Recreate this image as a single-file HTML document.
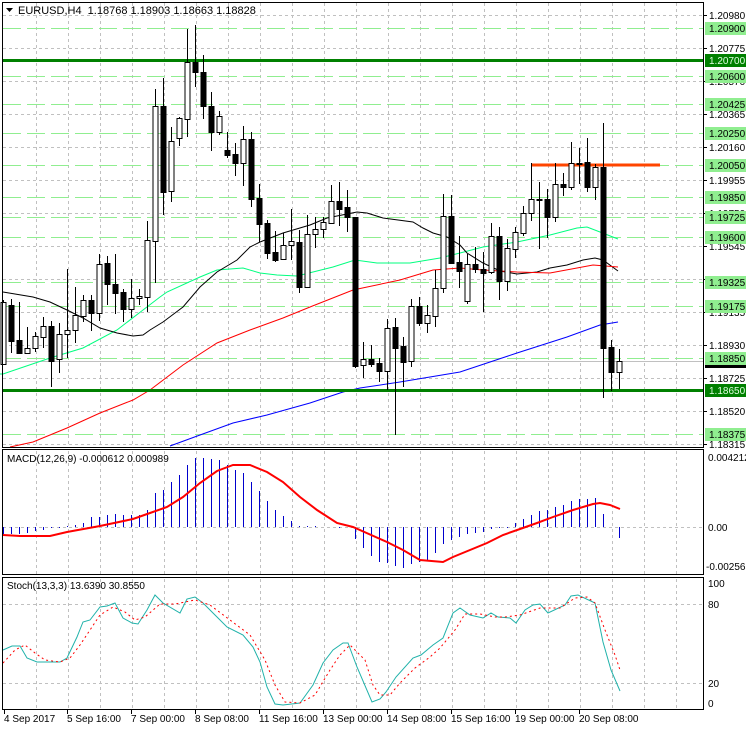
<!DOCTYPE html>
<html><head><meta charset="utf-8"><style>
html,body{margin:0;padding:0;background:#fff;}
svg{display:block;font-family:"Liberation Sans",sans-serif;}
</style></head><body>
<svg id="s" width="746" height="731" xmlns="http://www.w3.org/2000/svg">
</svg>
<script>
var S=document.getElementById('s');var h='';
function L(x1,y1,x2,y2,c,w,d){h+='<line x1="'+x1+'" y1="'+y1+'" x2="'+x2+'" y2="'+y2+'" stroke="'+c+'" stroke-width="'+(w||1)+'"'+(d?' stroke-dasharray="'+d+'"':'')+'/>';}
function P(pts,c,w,d){h+='<polyline fill="none" points="'+pts+'" stroke="'+c+'" stroke-width="'+(w||1)+'"'+(d?' stroke-dasharray="'+d+'"':'')+'/>';}
function T(x,y,t,c,s,a){h+='<text x="'+x+'" y="'+y+'" fill="'+(c||'#000')+'" font-size="'+(s||10)+'"'+(a?' text-anchor="'+a+'"':'')+'>'+t+'</text>';}
function R(x,y,w,hh,f,st){h+='<rect x="'+x+'" y="'+y+'" width="'+w+'" height="'+hh+'" fill="'+f+'"'+(st?' stroke="'+st+'"':'')+'/>';}
// vertical grid
for(var x=36;x<704;x+=32){L(x+.5,3,x+.5,447,'#c0c0c0',1,'3 3');L(x+.5,451,x+.5,574,'#c0c0c0',1,'3 3');L(x+.5,579,x+.5,709,'#c0c0c0',1,'3 3');}
// horizontal grey grid main
var gl=[15,48,81,114,147,180,213,246,279,312,345,378,411,444];
gl.forEach(function(y){L(3,y+.5,704,y+.5,'#c0c0c0',1,'3 3');});
L(3,527.5,704,527.5,'#c0c0c0',1,'3 3');L(3,604.5,704,604.5,'#c0c0c0',1,'3 3');L(3,683.5,704,683.5,'#c0c0c0',1,'3 3');
// light green levels
var lg=[[28,'1.20900'],[76,'1.20600'],[104,'1.20425'],[133,'1.20250'],[165,'1.20050'],[197,'1.19850'],[217,'1.19725'],[237,'1.19600'],[282,'1.19325'],[306,'1.19175'],[358,'1.18850'],[434,'1.18375']];
lg.forEach(function(a){L(3,a[0]+.5,704,a[0]+.5,'#90ee90',1,'18 6');});
// current price line
L(3,361.5,704,361.5,'#c0c0c0',1);
// MAs
P('0,374 3,374 50,358 83,348 117,330 143,310 160,297 167,292 200,277 217,270 243,268 260,273 277,275 297,276 333,267 355,260 377,263 410,263 440,258 460,253 483,247 517,242 550,235 577,228 587,227 600,232 618,239','#00ff7f',1);
P('3,292 33,297 50,302 67,310 83,318 100,328 117,333 133,336 143,335 150,330 163,322 183,307 200,287 217,272 237,260 250,247 260,242 283,233 310,225 327,218 357,212 367,213 383,218 413,222 423,228 433,233 447,237 460,245 467,253 483,263 500,271 517,274 537,272 550,268 567,265 583,260 595,258 603,260 618,271','#000',1);
P('10,447 33,442 67,428 100,413 133,400 150,390 183,365 217,343 250,330 283,318 310,307 353,290 400,280 433,270 460,268 483,270 517,272 550,273 577,268 593,265 618,267','#ff0000',1);
P('170,446 200,435 233,423 267,415 310,403 343,392 360,388 400,382 460,372 517,353 567,337 600,325 618,322','#0000ff',1);
// thick lines
L(3,60.5,704,60.5,'#008000',3);L(3,390.5,704,390.5,'#008000',3);
L(531,165,660,165,'#ff4500',3);
// candles [x,bull,top,bottom,high,low]
var C=[[3,1,302,364,300,364],[11,0,305,341,299,353],[19,0,340,353,302,353],[27,1,348,353,327,353],[35,1,336,348,332,352],[43,1,326,337,317,348],[51,0,326,361,321,387],[59,1,334,359,323,373],[67,1,330,334,269,358],[75,1,315,330,287,343],[83,1,300,316,295,322],[91,0,300,313,295,331],[99,1,264,313,254,321],[107,0,263,284,256,305],[115,0,284,293,254,314],[123,0,292,309,289,322],[131,1,298,309,279,318],[139,1,296,298,289,305],[147,1,240,297,221,312],[155,1,106,241,89,283],
[163,0,106,192,78,215],[171,1,141,191,127,202],[179,1,118,138,117,146],[187,1,62,119,29,137],[195,0,62,72,25,87],[203,0,72,106,55,119],[211,0,106,132,92,151],[219,1,116,132,111,135],[227,0,150,155,132,158],[235,0,154,163,143,176],[243,1,139,163,126,186],[251,0,139,199,132,207],[259,0,198,224,184,242],[267,0,223,253,220,259],[275,0,252,260,231,262],[283,1,245,259,233,260],[291,1,241,245,209,260],[299,0,242,287,230,293],[307,1,234,287,215,287],
[315,1,229,234,217,248],[323,1,222,229,217,238],[331,1,201,223,185,223],[339,0,201,209,182,226],[347,0,207,217,190,232],[355,0,217,366,217,368],[363,1,359,365,342,378],[371,0,359,364,345,367],[379,0,363,371,358,382],[387,1,328,371,319,390],[395,0,327,348,318,435],[403,0,346,362,337,387],[411,1,306,361,299,367],[419,0,306,323,297,326],[427,1,315,323,305,333],[435,1,288,316,270,327],[443,1,216,288,194,293],[451,0,216,263,195,263],
[459,0,262,271,236,288],[467,1,264,301,254,304],[475,0,264,269,247,273],[483,0,269,273,252,312],[491,1,236,272,223,274],[499,0,236,281,227,300],[507,1,248,281,239,291],[515,1,232,249,227,258],[523,1,213,233,206,236],[531,1,199,213,163,221],[539,1,199,200,182,249],[547,0,199,217,189,238],[555,1,184,217,163,222],[563,0,184,187,173,196],[571,1,163,187,142,190],[579,1,163,164,148,184],[587,0,162,187,138,192],[595,1,167,187,164,200],[603,0,167,348,123,398],[611,0,347,372,340,391],[619,1,361,372,349,389]];
C.forEach(function(c){var x=c[0];L(x+.5,c[4],x+.5,c[5],'#000',1);
 var hh=Math.max(1,c[3]-c[2]);
 if(c[1]){R(x-2,c[2]+.5,5,hh,'#fff','#000');}else{R(x-2.5,c[2],6,hh+1,'#000');}});
// MACD histogram
var M={3:534,11:534,19:534,27:533,35:531,43:530,51:528,59:528,67:526,75:525,83:523,91:517,99:517,107:515,115:514,123:515,131:515,139:515,147:510,155:493,163:490,171:482,179:475,187:465,195:458,203:458,211:459,219:460,227:465,235:470,243:473,251:482,259:491,267:501,275:510,283:516,291:521,299:526,307:526,315:526,
339:528,355:539,363:548,371:556,379:562,387:563,395:566,403:568,411:564,419:562,427:560,435:553,443:544,451:540,459:537,467:534,475:533,483:532,491:529,499:528,507:528,515:523,523:519,531:515,539:511,547:510,555:507,563:505,571:501,579:499,587:499,595:498,603:514,619:538};
for(var k in M){var x=+k;L(x+.5,527,x+.5,M[k],'#0000cd',1);}
P('3,535 20,536 50,536 67,532 100,526 133,519 150,513 167,507 183,497 200,483 217,471 233,465 250,465 267,472 283,482 300,497 317,510 337,523 353,527 387,542 403,550 420,560 443,562 453,557 487,543 503,535 520,529 537,523 553,517 573,510 593,504 600,503 610,505 620,509','#ff0000',2);
// Stoch
P('3,650 12,646 20,646 27,658 37,662 50,662 60,662 67,658 77,637 83,622 90,620 100,607 107,606 115,603 123,618 132,623 138,624 147,610 155,595 163,603 180,613 187,599 195,597 203,603 213,613 227,627 243,635 253,647 260,662 267,687 275,704 283,705 300,703 313,685 323,663 333,650 343,643 348,643 357,667 372,702 380,699 386,692 396,677 413,658 421,655 433,645 443,638 453,613 460,608 470,615 483,618 491,613 498,617 510,618 516,623 525,610 533,605 540,604 548,613 565,605 571,596 578,595 595,603 603,642 611,670 620,691','#20b2aa',1);
P('3,663 15,650 25,645 35,653 45,660 60,662 70,658 80,645 90,630 100,615 113,607 125,612 135,620 145,617 160,604 175,604 195,600 210,605 230,620 250,635 265,660 275,685 285,702 300,703 315,695 330,670 340,655 350,645 365,660 373,685 380,695 390,695 400,683 415,668 430,657 440,648 455,630 465,614 480,614 495,617 505,617 520,615 540,608 560,608 575,598 587,597 595,603 605,630 615,655 620,670','#ff0000',1,'2 3');
// panel borders
h+='<rect x="2.5" y="2.5" width="701" height="445" fill="none" stroke="#000"/>';
h+='<rect x="2.5" y="449.5" width="701" height="125" fill="none" stroke="#000"/>';
h+='<rect x="2.5" y="577.5" width="701" height="132" fill="none" stroke="#000"/>';
// right axis ticks & labels
var ax=[[15,'1.20980'],[48,'1.20775'],[81,'1.20570'],[114,'1.20365'],[147,'1.20160'],[180,'1.19955'],[213,'1.19750'],[246,'1.19545'],[279,'1.19340'],[312,'1.19135'],[345,'1.18930'],[378,'1.18725'],[411,'1.18520'],[444,'1.18315']];
ax.forEach(function(a){L(704,a[0]+.5,707,a[0]+.5,'#000');T(709,a[0]+4,a[1]);});
R(705,356,41,12,'#000');
lg.forEach(function(a){R(705,a[0]-6,41,13,'#90ee90');T(709,a[0]+4,a[1]);});
R(705,54,41,13,'#008000');T(709,64,'1.20700','#e0ffe0');
R(705,384,41,13,'#008000');T(709,394,'1.18650','#e0ffe0');
T(708,461,'0.004212');T(708,531,'0.00');T(706,570,'-0.002563');
T(708,587,'100');T(708,608,'80');T(708,687,'20');T(708,707,'0');
// titles
h+='<path d="M6 8 L13 8 L9.5 12 Z" fill="#000"/>';
T(18,14,'EURUSD,H4&#160;&#160;1.18768 1.18903 1.18663 1.18828','#000',11);
T(7,462,'MACD(12,26,9) -0.000612 0.000989','#000',10);
T(7,589,'Stoch(13,3,3) 13.6390 30.8550','#000',10);
// dates
var D=[[3,'4 Sep 2017'],[66,'5 Sep 16:00'],[130,'7 Sep 00:00'],[194,'8 Sep 08:00'],[258,'11 Sep 16:00'],[322,'13 Sep 00:00'],[386,'14 Sep 08:00'],[450,'15 Sep 16:00'],[514,'19 Sep 00:00'],[578,'20 Sep 08:00']];
D.forEach(function(d){L(d[0]+1.5,710,d[0]+1.5,714,'#000');T(d[0]+1,722,d[1],'#000',10);});
S.innerHTML=h;
</script>
</body></html>
